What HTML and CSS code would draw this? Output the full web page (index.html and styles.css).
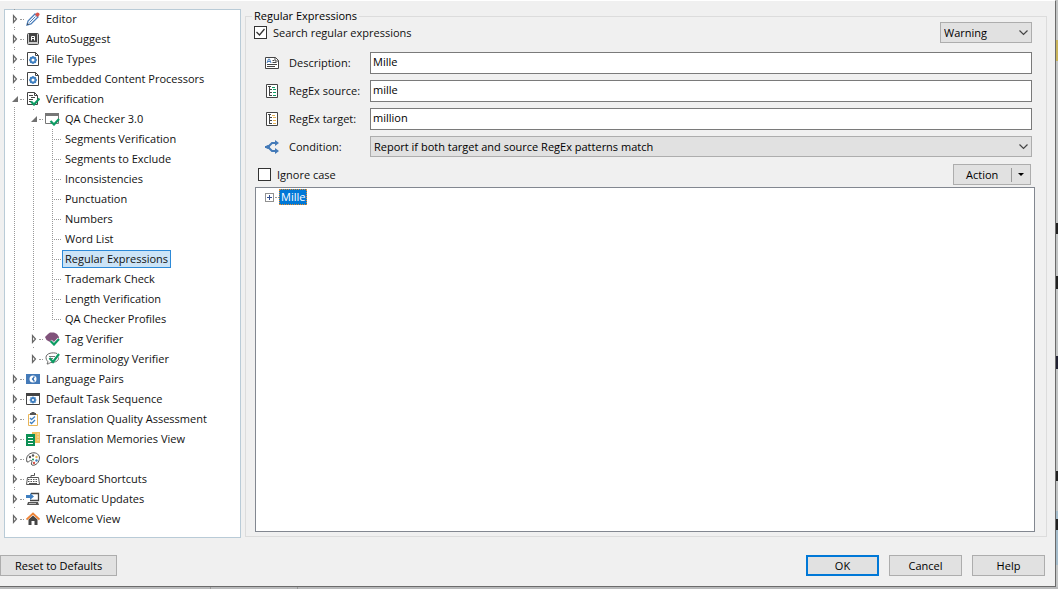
FILE: index.html
```
<!DOCTYPE html>
<html lang="en">
<head>
    <meta charset="utf-8">
    <title>Options</title>
    <link rel="stylesheet" href="styles.css">
</head>
<body>
    <svg class="sprite" aria-hidden="true">
        <symbol id="closed" viewBox="0 0 11 16"><path d="M4.5 4.5v7L7.500 8z" fill="#fff" stroke="#666" stroke-width="1.2"/></symbol>
        <symbol id="open" viewBox="0 0 11 16"><path d="M9 5v6H3z" fill="#707070"/></symbol>
        <symbol id="chevron" viewBox="0 0 9 6"><path d="M.5.5l4 4 4-4" fill="none" stroke="#444" stroke-width="1.2"/></symbol>
        <symbol id="tick" viewBox="0 0 13 13"><path d="M2.5 6l3 3 5-6" fill="none" stroke="#333" stroke-width="1.3"/></symbol>
        <symbol id="pencil" viewBox="0 0 14 14"><path d="M1 13l1-4 7-7 3 3-7 7z" fill="#fff" stroke="#4a7ebb" stroke-width="1.3"/><path d="M3.500 10.500l6-6" stroke="#4a7ebb"/><path d="M9 2.500L11 .5q3 0 2.500 2.500l-2 2z" fill="#d9534a"/><path d="M1 13l.5-2 1.500 1.500z" fill="#444"/></symbol>
        <symbol id="key" viewBox="0 0 14 14"><rect x="1.500" y="1.500" width="11" height="11" rx="1" fill="#ccc" stroke="#444"/><rect x="3" y="2" width="8" height="8" fill="#444"/><path d="M5.500 8.500v-4h3v4M5.500 6.500h3" fill="none" stroke="#fff"/></symbol>
        <symbol id="filegear" viewBox="0 0 14 14"><path d="M1.500.5h8l3 3v10h-11z" fill="#fff" stroke="#444"/><path d="M9.500.5v3h3" fill="none" stroke="#444"/><circle cx="7" cy="8" r="2.500" fill="#fff" stroke="#3f7fc0" stroke-width="2"/><path d="M7 4v1.500M7 10.500V12M3 8h1.500M9.500 8H11M4.200 5.200l1 1M8.800 9.800l1 1M9.800 5.200l-1 1M5.200 9.800l-1 1" stroke="#3f7fc0" stroke-width="1.400"/></symbol>
        <symbol id="verify" viewBox="0 0 14 14"><path d="M1.500.5h7l3 3v9h-10z" fill="#fff" stroke="#444"/><path d="M8.500.5v3h3M3 3.500h4M5 5.500h4M3 7.500h4M3 9.500h2" fill="none" stroke="#444"/><path d="M5 9.500l3 3 5.500-6" fill="none" stroke="#0d9b63" stroke-width="2.200"/></symbol>
        <symbol id="qa" viewBox="0 0 15 14"><path d="M.5 3v8.500h13V3" fill="#fff" stroke="#777"/><path d="M0 1h14v3H0z" fill="#777"/><path d="M5.500 9l3.500 3.500 5-5.500" fill="none" stroke="#0d9b63" stroke-width="2.200"/></symbol>
        <symbol id="tag" viewBox="0 0 15 14"><path d="M3 2l2-1.500h4L12 2l2 3-1 4-3 1H5L1.500 8 0 5z" fill="#80527a"/><path d="M5.500 9l3.500 3.500 5-5.500" fill="none" stroke="#fff" stroke-width="3.500"/><path d="M5.500 9l3.500 3.500 5-5.500" fill="none" stroke="#0d9b63" stroke-width="2.200"/></symbol>
        <symbol id="term" viewBox="0 0 15 14"><path d="M12 1.500C8 0 1 1 1 5.500c0 3 2 3.500 2 4.500l-1 2c2 0 3-1.500 4-1.500 5 0 8-2 7.500-5" fill="#fff" stroke="#666"/><path d="M4 4.500h6M4 6.500h4" stroke="#777"/><path d="M4.500 6l3.500 4 6-8" fill="none" stroke="#0d9b63" stroke-width="2.200"/></symbol>
        <symbol id="pairs" viewBox="0 0 14 14"><path d="M0 2h14v10H0z" fill="#447ab8"/><circle cx="7" cy="7" r="3.500" fill="#fff"/><path d="M8.500 4.500L6.500 7l2 2.500M6 7h2" stroke="#447ab8" stroke-width="1.300" fill="none"/></symbol>
        <symbol id="task" viewBox="0 0 14 14"><path d="M.5 1.500h13v11H.5z" fill="#fff" stroke="#444"/><path d="M0 1h14v3H0z" fill="#444"/><circle cx="7" cy="8" r="2" fill="#fff" stroke="#3f7fc0" stroke-width="1.800"/><path d="M7 4.500V6M7 10v1.500M3.500 8H5M9 8h1.500M4.500 5.500l1 1M8.500 9.500l1 1M9.500 5.500l-1 1M5.500 9.500l-1 1" stroke="#3f7fc0" stroke-width="1.200"/></symbol>
        <symbol id="clip" viewBox="0 0 14 14"><path d="M2.500 2.500h9v11h-9z" fill="#fff" stroke="#e7b458"/><path d="M4 3h6V1H8.500V0h-3v1H4z" fill="#555"/><path d="M4 6l1.500 1.500L9 4.500M4 10l1.500 1.500L9 8" fill="none" stroke="#3f7fc0" stroke-width="1.300"/></symbol>
        <symbol id="memory" viewBox="0 0 14 14"><path d="M6 0h8v11H6z" fill="#f0c060"/><path d="M12 1.500v8" stroke="#fff" stroke-dasharray="1 2"/><path d="M0 2h9v12H0z" fill="#0d9055"/><path d="M2 5.500h5M2 8.500h5M2 11.500h5" stroke="#fff"/></symbol>
        <symbol id="palette" viewBox="0 0 14 14"><path d="M1 10C-1 4 4 .5 8 .8c4 .2 6 3.200 5.300 6.500C12.500 12 8 14 6 13c-2-1.200 1-3-.5-4.500C4 7.500 3 10.500 1 10z" fill="#fff" stroke="#555"/><circle cx="4" cy="5" r="1.200" fill="#555"/><circle cx="7" cy="3.500" r="1.200" fill="#555"/><circle cx="10.500" cy="5" r="1.200" fill="#e9b54d"/><circle cx="10.500" cy="8.500" r="1.200" fill="#3f7fc0"/><circle cx="8" cy="11" r="1.200" fill="#d9534a"/><circle cx="7" cy="7.500" r="1" fill="#0d9055"/></symbol>
        <symbol id="keyboard" viewBox="0 0 14 14"><path d="M5 5V3.500h3.500V1" fill="none" stroke="#555"/><path d="M1.500 5.500h11l1 7H.5z" fill="#fff" stroke="#555"/><path d="M2 7.500h10M2 9.500h10" stroke="#555" stroke-dasharray="1.500 1"/><path d="M3 11.500h8" stroke="#555"/></symbol>
        <symbol id="update" viewBox="0 0 14 14"><path d="M5 1.500h7.500v7H4" fill="#fff" stroke="#444" stroke-width="1.300"/><path d="M0 3h4V1l4 3.500L4 8V6H0z" fill="#3f7fc0"/><path d="M2 10h10l1 3H1z" fill="#555"/><path d="M3 11.500h7" stroke="#bbb"/></symbol>
        <symbol id="home" viewBox="0 0 14 14"><path d="M2.500 7.500L7 3.500l4.500 4V13h-3V9h-3v4h-3z" fill="#444"/><path d="M.5 7.500L7 1.500l6.500 6" fill="none" stroke="#ee8437" stroke-width="1.800"/></symbol>
        <symbol id="desc" viewBox="0 0 14 14"><path d="M.5 1.500h10l3 3v8H.5z" fill="#fff" stroke="#444"/><path d="M10 1.500V5h3.500M7.500 4.500h1.500M7.500 6.500h4M2 8.500h10M2 10.500h8" fill="none" stroke="#444"/><path d="M2 7l1.500-4h1L6 7M3 5.500h2" fill="none" stroke="#4a7ebb"/></symbol>
        <symbol id="source" viewBox="0 0 14 14"><path d="M1.500.5h11v13h-11z" fill="#fff" stroke="#444"/><path d="M3 2.500h3M4.500 3v8.500M4 5.500h3M4 8.500h3M4 11.500h3" fill="none" stroke="#444"/><path d="M7 3.500h3M8 5.500h3M8 8.500h3M8 11.500h3" stroke="#0d9b63"/></symbol>
        <symbol id="target" viewBox="0 0 14 14"><path d="M1.500.5h11v13h-11z" fill="#fff" stroke="#444"/><path d="M3 2.500h3M4.500 3v8.500M4 5.500h3M4 8.500h3M4 11.500h3" fill="none" stroke="#444"/><path d="M7 3.500h3M8 5.500h3M8 8.500h3M8 11.500h3" stroke="#e7b458"/></symbol>
        <symbol id="branch" viewBox="0 0 14 14"><path d="M0 7h3M3 7l4-4h4M3 7l4 4h4" fill="none" stroke="#447ab8" stroke-width="2"/><path d="M10 0l4 3-4 3zM10 8l4 3-4 3z" fill="#447ab8"/><circle cx="3" cy="7" r="2" fill="#447ab8"/></symbol>
    </svg>

    <div class="dialog">
        <div class="content">
            <ul class="tree" role="tree" aria-label="Options">
                <li role="treeitem"><div class="row"><svg class="twisty"><use href="#closed"/></svg><i></i><svg class="icon"><use href="#pencil"/></svg><span class="label">Editor</span></div></li>
                <li role="treeitem"><div class="row"><svg class="twisty"><use href="#closed"/></svg><i></i><svg class="icon"><use href="#key"/></svg><span class="label">AutoSuggest</span></div></li>
                <li role="treeitem"><div class="row"><svg class="twisty"><use href="#closed"/></svg><i></i><svg class="icon"><use href="#filegear"/></svg><span class="label">File Types</span></div></li>
                <li role="treeitem"><div class="row"><svg class="twisty"><use href="#closed"/></svg><i></i><svg class="icon"><use href="#filegear"/></svg><span class="label">Embedded Content Processors</span></div></li>
                <li role="treeitem" aria-expanded="true"><div class="row"><svg class="twisty"><use href="#open"/></svg><i></i><svg class="icon"><use href="#verify"/></svg><span class="label">Verification</span></div>
                    <ul role="group">
                        <li role="treeitem" aria-expanded="true"><div class="row"><svg class="twisty"><use href="#open"/></svg><i></i><svg class="icon"><use href="#qa"/></svg><span class="label">QA Checker 3.0</span></div>
                            <ul role="group" class="leaves">
                                <li role="treeitem"><div class="row"><i></i><span class="label">Segments Verification</span></div></li>
                                <li role="treeitem"><div class="row"><i></i><span class="label">Segments to Exclude</span></div></li>
                                <li role="treeitem"><div class="row"><i></i><span class="label">Inconsistencies</span></div></li>
                                <li role="treeitem"><div class="row"><i></i><span class="label">Punctuation</span></div></li>
                                <li role="treeitem"><div class="row"><i></i><span class="label">Numbers</span></div></li>
                                <li role="treeitem"><div class="row"><i></i><span class="label">Word List</span></div></li>
                                <li role="treeitem" aria-selected="true"><div class="row"><i></i><span class="label selected">Regular Expressions</span></div></li>
                                <li role="treeitem"><div class="row"><i></i><span class="label">Trademark Check</span></div></li>
                                <li role="treeitem"><div class="row"><i></i><span class="label">Length Verification</span></div></li>
                                <li role="treeitem"><div class="row"><i></i><span class="label">QA Checker Profiles</span></div></li>
                            </ul>
                        </li>
                        <li role="treeitem"><div class="row"><svg class="twisty"><use href="#closed"/></svg><i></i><svg class="icon"><use href="#tag"/></svg><span class="label">Tag Verifier</span></div></li>
                        <li role="treeitem"><div class="row"><svg class="twisty"><use href="#closed"/></svg><i></i><svg class="icon"><use href="#term"/></svg><span class="label">Terminology Verifier</span></div></li>
                    </ul>
                </li>
                <li role="treeitem"><div class="row"><svg class="twisty"><use href="#closed"/></svg><i></i><svg class="icon"><use href="#pairs"/></svg><span class="label">Language Pairs</span></div></li>
                <li role="treeitem"><div class="row"><svg class="twisty"><use href="#closed"/></svg><i></i><svg class="icon"><use href="#task"/></svg><span class="label">Default Task Sequence</span></div></li>
                <li role="treeitem"><div class="row"><svg class="twisty"><use href="#closed"/></svg><i></i><svg class="icon"><use href="#clip"/></svg><span class="label">Translation Quality Assessment</span></div></li>
                <li role="treeitem"><div class="row"><svg class="twisty"><use href="#closed"/></svg><i></i><svg class="icon"><use href="#memory"/></svg><span class="label">Translation Memories View</span></div></li>
                <li role="treeitem"><div class="row"><svg class="twisty"><use href="#closed"/></svg><i></i><svg class="icon"><use href="#palette"/></svg><span class="label">Colors</span></div></li>
                <li role="treeitem"><div class="row"><svg class="twisty"><use href="#closed"/></svg><i></i><svg class="icon"><use href="#keyboard"/></svg><span class="label">Keyboard Shortcuts</span></div></li>
                <li role="treeitem"><div class="row"><svg class="twisty"><use href="#closed"/></svg><i></i><svg class="icon"><use href="#update"/></svg><span class="label">Automatic Updates</span></div></li>
                <li role="treeitem"><div class="row"><svg class="twisty"><use href="#closed"/></svg><i></i><svg class="icon"><use href="#home"/></svg><span class="label">Welcome View</span></div></li>
            </ul>

            <fieldset class="panel">
                <legend>Regular Expressions</legend>
                <div class="bar search">
                    <label class="check"><span class="box"><input type="checkbox" checked><svg><use href="#tick"/></svg></span>Search regular expressions</label>
                    <span class="select severity">
                        <select aria-label="Severity"><option>Warning</option></select>
                        <svg><use href="#chevron"/></svg>
                    </span>
                </div>
                <div class="fields">
                    <svg class="icon"><use href="#desc"/></svg>
                    <label for="description">Description:</label>
                    <input type="text" id="description" value="Mille">
                    <svg class="icon"><use href="#source"/></svg>
                    <label for="source-regex">RegEx source:</label>
                    <input type="text" id="source-regex" value="mille">
                    <svg class="icon"><use href="#target"/></svg>
                    <label for="target-regex">RegEx target:</label>
                    <input type="text" id="target-regex" value="million">
                    <svg class="icon"><use href="#branch"/></svg>
                    <label for="condition">Condition:</label>
                    <span class="select">
                        <select id="condition"><option>Report if both target and source RegEx patterns match</option></select>
                        <svg><use href="#chevron"/></svg>
                    </span>
                </div>
                <div class="bar actions">
                    <label class="check"><span class="box"><input type="checkbox"></span>Ignore case</label>
                    <button type="button" class="split"><span>Action</span><span class="drop"></span></button>
                </div>
                <div class="rules" role="tree" aria-label="Rules">
                    <div class="rule" role="treeitem"><span class="plus"></span><i></i><span class="name">Mille</span></div>
                </div>
            </fieldset>
        </div>

        <div class="footer">
            <button type="button">Reset to Defaults</button>
            <div class="group">
                <button type="button" class="default">OK</button>
                <button type="button">Cancel</button>
                <button type="button">Help</button>
            </div>
        </div>
    </div>
</body>
</html>
```

FILE: styles.css
```
* {
    box-sizing: border-box;
}

/* the window behind the dialog shows along the right and bottom edges */
body {
    margin: 0;
    height: 100vh;
    padding: 0 2px 2px 0;
    overflow: hidden;
    font: 11px/16px "Open Sans", "Noto Sans", sans-serif;
    color: #111;
    background:
        linear-gradient(#999, #999) 210px 100% / 1px 2px no-repeat,
        linear-gradient(#999, #999) 297px 100% / 1px 2px no-repeat,
        linear-gradient(#b9babb, #b9babb) 0 100% / 100% 2px no-repeat,
        linear-gradient(#c9b45c 0 0) 100% 40px / 2px 21px no-repeat,
        linear-gradient(#222 0 0) 100% 223px / 2px 11px no-repeat,
        linear-gradient(#222 0 0) 100% 276px / 2px 13px no-repeat,
        linear-gradient(#223 0 0) 100% 356px / 2px 13px no-repeat,
        linear-gradient(#222 0 0) 100% 471px / 2px 10px no-repeat,
        linear-gradient(#222 0 0) 100% 519px / 2px 11px no-repeat,
        linear-gradient(#a5bccb 0 0) 100% 511px / 2px 54px no-repeat,
        #c3c5c5;
}

ul {
    list-style: none;
    margin: 0;
    padding: 0;
}

.sprite {
    display: none;
}

.dialog {
    display: flex;
    flex-direction: column;
    height: 100%;
    background: #f0f0f0;
    border-top: 1px solid #fff;
    border-right: 1px solid #6b6b6b;
    border-bottom: 1px solid #6b6b6b;
}

.content {
    display: flex;
    flex: 1;
    gap: 4px;
    min-height: 0;
    padding: 8px 8px 0 4px;
}

.icon {
    width: 14px;
    height: 14px;
    flex: none;
}

/* navigation tree */
.tree {
    width: 237px;
    flex: none;
    padding-left: 5px;
    background: #fff;
    box-shadow: inset 0 0 0 1px #b9cbd7;
}

.tree ul {
    margin-left: 19px;
}

.tree li {
    background: repeating-linear-gradient(#999 0 1px, transparent 1px 2px) 5px 0 / 1px 100% no-repeat;
}

.tree > li:last-child,
.tree ul:not(.leaves) > li:last-child {
    background: none;
}

.leaves li:last-child {
    background-size: 1px 10px;
}

.row {
    display: flex;
    align-items: center;
    height: 20px;
}

.row i {
    width: 4px;
    margin-right: 2px;
    border-top: 1px dotted #999;
}

.leaves i {
    width: 9px;
    margin: 0 1px 0 5px;
}

.twisty {
    width: 11px;
    height: 16px;
    background: #fff;
}

.row .icon {
    margin-right: 3px;
}

.tree ul .icon {
    width: 15px;
    margin-right: 2px;
}

.label {
    padding: 0 2px;
    border: 1px solid transparent;
    white-space: nowrap;
}

.selected {
    background: #cce4f7;
    border-color: #2d8ad8;
}

/* settings panel */
.panel {
    flex: 1;
    display: flex;
    flex-direction: column;
    min-width: 0;
    margin: 0 0 1px;
    padding: 0 11px 4px 9px;
    border: 1px solid #dcdcdc;
}

legend {
    margin-left: -3px;
    padding: 0 2px;
    line-height: 14px;
    color: #000;
}

.bar {
    display: flex;
    justify-content: space-between;
    align-items: center;
}

.search {
    margin: -1px 3px 0 -1px;
}

.check {
    display: flex;
    align-items: center;
    gap: 6px;
}

.box {
    display: grid;
}

.box > * {
    grid-area: 1 / 1;
    width: 13px;
    height: 13px;
    margin: 0;
}

.box svg {
    pointer-events: none;
}

.box input {
    appearance: none;
    background: #fff;
    border: 1px solid #333;
}

.select {
    display: grid;
    align-items: center;
}

.select > * {
    grid-area: 1 / 1;
}

.select svg {
    width: 9px;
    height: 6px;
    margin-right: 4px;
    justify-self: end;
    pointer-events: none;
}

.severity {
    width: 92px;
}

select,
button {
    height: 21px;
    font: inherit;
    color: #000;
    background: #e1e1e1;
    border: 1px solid #adadad;
    border-radius: 0;
}

select {
    appearance: none;
    width: 100%;
    padding: 0 3px;
}

.fields {
    display: grid;
    grid-template-columns: 18px 75px 1fr;
    align-items: center;
    gap: 6px;
    margin: 9px 3px 0 10px;
}

.fields input {
    width: 100%;
    height: 22px;
    padding: 0 2px 3px;
    font: inherit;
    color: #000;
    background: #fff;
    border: 1px solid #7a7a7a;
}

.actions {
    margin: 7px 4px 0 3px;
}

.split {
    display: flex;
    align-items: center;
    justify-content: space-between;
    width: 78px;
    padding: 0 6px 0 12px;
}

.drop {
    display: flex;
    align-items: center;
    height: 14px;
    padding-left: 6px;
    border-left: 1px solid #999;
}

.drop::after {
    content: "";
    border: 3px solid transparent;
    border-top-color: #000;
    border-bottom: 0;
}

.rules {
    flex: 1;
    margin-top: 2px;
    padding: 1px 9px;
    background: #fff;
    border: 1px solid #828790;
}

.rule {
    display: flex;
    align-items: center;
}

.plus {
    width: 9px;
    height: 9px;
    border: 1px solid #919191;
    background:
        linear-gradient(#34508f 0 0) center / 5px 1px no-repeat,
        linear-gradient(#34508f 0 0) center / 1px 5px no-repeat;
}

.rule i {
    width: 4px;
    margin-left: 1px;
    border-top: 1px dotted #999;
}

.name {
    padding: 0 1px;
    line-height: 14px;
    color: #fff;
    background: #0078d7;
    border: 1px dotted #e58a28;
}

/* buttons */
.footer {
    display: flex;
    justify-content: space-between;
    padding: 17px 10px 10px 0;
}

.footer button {
    min-width: 73px;
    padding: 0 14px;
}

.group {
    display: flex;
    gap: 10px;
}

.footer .default {
    border: 2px solid #0078d7;
}
```
